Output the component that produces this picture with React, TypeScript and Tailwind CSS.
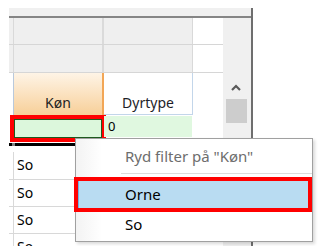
export default function App() {
  const font = { fontFamily: '"Noto Sans", "Open Sans", sans-serif' };
  const rows = ["So", "So", "So", "So"];

  return (
    <div className="relative w-[320px] h-[246px] overflow-hidden bg-white" style={font}>
      <div className="pt-[8px] pl-[9px]">
        <div className="w-[244px] h-[238px] flex flex-col border-r-2 border-[#6e6e6e] overflow-hidden">
          <div className="h-[8px] shrink-0 bg-[#f0f0f0]" />
          <div className="h-[2px] shrink-0 bg-[#858585]" />
          <div className="flex flex-row shrink-0">
            {/* grid */}
            <div className="w-[214px] flex flex-col">
              <div className="flex flex-row h-[27px] shrink-0 border-b border-[#d6d6d6]">
                <div className="w-[4px] bg-[#efefef] border-r border-[#d9d9d9] box-content" />
                <div className="w-[88px] bg-[#efefef]" />
                <div className="w-[2px] bg-[#dadada]" />
                <div className="w-[88px] bg-[#efefef] border-r border-[#d9d9d9] box-content" />
                <div className="flex-1 bg-white" />
              </div>
              <div className="flex flex-row h-[28px] shrink-0 border-b border-[#d6d6d6]">
                <div className="w-[4px] bg-[#efefef] border-r border-[#d9d9d9] box-content" />
                <div className="w-[88px] bg-[#efefef]" />
                <div className="w-[2px] bg-[#dadada]" />
                <div className="w-[88px] bg-[#efefef] border-r border-[#d9d9d9] box-content" />
                <div className="flex-1 bg-white" />
              </div>
              {/* header */}
              <div className="flex flex-row h-[42px] shrink-0">
                <div className="w-[4px] bg-white border-r border-[#b9c9dc] box-content" />
                <div className="w-[88px] bg-gradient-to-b from-[#fef4e6] to-[#f7cf98] flex items-end justify-center pb-[2px] text-[14px] text-[#1e1e1e]">
                  Køn
                </div>
                <div className="w-[2px] bg-[#f2a656]" />
                <div className="w-[88px] bg-white border-r border-b border-[#c3d6ea] box-content flex items-end justify-center pb-[1px] text-[14px] text-[#1e1e28]">
                  Dyrtype
                </div>
                <div className="flex-1 bg-white" />
              </div>
              {/* filter row */}
              <div className="flex flex-row h-[23px] shrink-0">
                <div className="w-[5px]" />
                <div className="w-[88px] h-[19px] mt-[4px] bg-[#dcf7dc] border border-[#1f5a1f] outline-4 outline-[#ff0000]" />
                <div className="w-[2px]" />
                <div className="w-[88px] mt-[1px] h-[21px] bg-[#e0f8e0] pl-[4px] text-[13px] leading-[20px] text-black">
                  0
                </div>
                <div className="flex-1 bg-white" />
              </div>
              <div className="h-[5px] shrink-0" />
              <div className="flex flex-row h-[3px] w-[66px] shrink-0">
                <div className="w-[3px] bg-black" />
                <div className="w-[3px] bg-[#808080]" />
                <div className="flex-1 bg-black" />
              </div>
              {rows.map((r, i) => (
                <div
                  key={i}
                  className={`flex flex-row shrink-0 border-b border-[#d8d8d8] ${i === 0 ? "h-[34px] pt-[6px]" : "h-[27px]"}`}
                >
                  <div className="w-[4px] border-r border-[#d9d9d9] box-content" />
                  <div className="pl-[3px] text-[14px] leading-[26px] text-black">{r}</div>
                </div>
              ))}
            </div>
            {/* scrollbar */}
            <div className="w-[28px] bg-[#f0f0f0] flex flex-col items-center">
              <div className="h-[66px] shrink-0" />
              <svg width="10" height="7" viewBox="0 0 10 7" className="ml-[-2px] shrink-0">
                <polyline points="1,6 5,2 9,6" fill="none" stroke="#5a5a5a" strokeWidth="2.2" />
              </svg>
              <div className="mt-[8px] ml-[-2px] w-[21px] h-[24px] shrink-0 bg-[#cdcdcd]" />
            </div>
          </div>
        </div>
      </div>

      {/* context menu */}
      <div className="absolute left-[75px] top-[138px] w-[238px] h-[104px] bg-white border border-[#a0a0a0] shadow-[2px_2px_3px_rgba(0,0,0,0.15)] flex flex-col">
        <div className="absolute left-0 top-0 bottom-0 w-[26px] bg-gradient-to-r from-[#f3f3f3] to-white" />
        <div className="relative h-[34px] pl-[49px] flex items-center text-[15px] text-[#6d6d6d]">
          Ryd filter på "Køn"
        </div>
        <div className="relative h-[1px] ml-[45px] bg-[#dcdcdc]" />
        <div className="h-[7px]" />
        <div className="relative mx-[2px] mr-[4px] h-[27px] bg-[#b9dcf2] border-l border-[#6fb2e6] outline-4 outline-[#ff0000] pl-[46px] flex items-center text-[15px] text-black">
          Orne
        </div>
        <div className="relative h-[32px] pl-[49px] flex items-center text-[15px] text-black">
          So
        </div>
      </div>
    </div>
  );
}
